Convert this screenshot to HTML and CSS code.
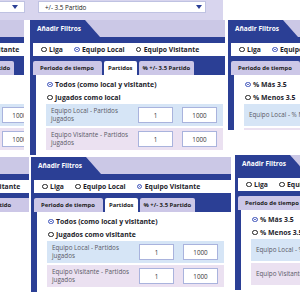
FILE: index.html
```html
<!DOCTYPE html>
<html lang="es">
<head>
  <meta charset="UTF-8" />
  <meta name="viewport" content="width=device-width, initial-scale=1.0"/>
  <title>Añadir Filtros</title>
  <link rel="stylesheet" href="styles.css">
</head>
<body>
<div class="board">

  <div class="tile bar">
    <div class="select sel-a"><span class="arrow"></span></div>
    <div class="select sel-b"><span>+/- 3.5 Partido</span><span class="arrow"></span></div>
  </div>

  <!-- upper left, cut -->
  <div class="tile t-ul">
    <div class="panel">
      <div class="panel-head"><span class="head-tab">Añadir Filtros</span></div>
      <div class="panel-body">
        <div class="scope"><span class="radio">Liga</span><span class="radio">Equipo Local</span><span class="radio on">Equipo Visitante</span></div>
        <div class="tabs"><span class="tab">Periodo de tiempo</span><span class="tab active">Partidos</span><span class="tab">% +/- 3.5 Partido</span></div>
        <div class="content">
          <div class="opt on">Todos (como local y visitante)</div>
          <div class="opt">Jugados como visitante</div>
          <div class="range local"><span class="lbl">Equipo Local - Partidos jugados</span><span class="num">1</span><span class="num">1000</span></div>
          <div class="range away"><span class="lbl">Equipo Visitante - Partidos jugados</span><span class="num">1</span><span class="num">1000</span></div>
        </div>
      </div>
    </div>
  </div>

  <div class="tile t-a">
    <div class="panel">
      <div class="panel-head"><span class="head-tab">Añadir Filtros</span></div>
      <div class="panel-body">
        <div class="scope"><span class="radio">Liga</span><span class="radio on">Equipo Local</span><span class="radio">Equipo Visitante</span></div>
        <div class="tabs"><span class="tab">Periodo de tiempo</span><span class="tab active">Partidos</span><span class="tab">% +/- 3.5 Partido</span></div>
        <div class="content">
          <div class="opt on">Todos (como local y visitante)</div>
          <div class="opt">Jugados como local</div>
          <div class="range local"><span class="lbl">Equipo Local - Partidos jugados</span><span class="num">1</span><span class="num">1000</span></div>
          <div class="range away"><span class="lbl">Equipo Visitante - Partidos jugados</span><span class="num">1</span><span class="num">1000</span></div>
        </div>
      </div>
    </div>
  </div>

  <div class="tile t-b">
    <div class="panel">
      <div class="panel-head"><span class="head-tab">Añadir Filtros</span></div>
      <div class="panel-body">
        <div class="scope"><span class="radio">Liga</span><span class="radio on">Equipo Local</span><span class="radio">Equipo Visitante</span></div>
        <div class="tabs"><span class="tab">Periodo de tiempo</span><span class="tab">Partidos</span><span class="tab active">% +/- 3.5 Partido</span></div>
        <div class="content">
          <div class="opt on">% Más 3.5</div>
          <div class="opt">% Menos 3.5</div>
          <div class="range local"><span class="lbl">Equipo Local - % Más 3.5</span><span class="num">0</span><span class="num">100</span></div>
          <div class="range away"><span class="lbl">Equipo Visitante - % Más 3.5</span><span class="num">0</span><span class="num">100</span></div>
        </div>
      </div>
    </div>
  </div>

  <!-- lower left, cut -->
  <div class="tile t-ll">
    <div class="panel">
      <div class="panel-head"><span class="head-tab">Añadir Filtros</span></div>
      <div class="panel-body">
        <div class="scope"><span class="radio">Liga</span><span class="radio">Equipo Local</span><span class="radio on">Equipo Visitante</span></div>
        <div class="tabs"><span class="tab">Periodo de tiempo</span><span class="tab active">Partidos</span><span class="tab">% +/- 3.5 Partido</span></div>
        <div class="content">
          <div class="opt on">Todos (como local y visitante)</div>
          <div class="opt">Jugados como visitante</div>
        </div>
      </div>
    </div>
  </div>

  <div class="tile t-c">
    <div class="panel">
      <div class="panel-head"><span class="head-tab">Añadir Filtros</span></div>
      <div class="panel-body">
        <div class="scope"><span class="radio">Liga</span><span class="radio">Equipo Local</span><span class="radio on">Equipo Visitante</span></div>
        <div class="tabs"><span class="tab">Periodo de tiempo</span><span class="tab active">Partidos</span><span class="tab">% +/- 3.5 Partido</span></div>
        <div class="content">
          <div class="opt on">Todos (como local y visitante)</div>
          <div class="opt">Jugados como visitante</div>
          <div class="range local"><span class="lbl">Equipo Local - Partidos jugados</span><span class="num">1</span><span class="num">1000</span></div>
          <div class="range away"><span class="lbl">Equipo Visitante - Partidos jugados</span><span class="num">1</span><span class="num">1000</span></div>
        </div>
      </div>
    </div>
  </div>

  <div class="tile t-d">
    <div class="panel">
      <div class="panel-head"><span class="head-tab">Añadir Filtros</span></div>
      <div class="panel-body">
        <div class="scope"><span class="radio">Liga</span><span class="radio">Equipo Local</span><span class="radio on">Equipo Visitante</span></div>
        <div class="tabs"><span class="tab">Periodo de tiempo</span><span class="tab">Partidos</span><span class="tab active">% +/- 3.5 Partido</span></div>
        <div class="content">
          <div class="opt on">% Más 3.5</div>
          <div class="opt">% Menos 3.5</div>
          <div class="range local"><span class="lbl">Equipo Local - % Más 3.5</span><span class="num">0</span><span class="num">100</span></div>
          <div class="range away"><span class="lbl">Equipo Visitante - % Más 3.5</span><span class="num">0</span><span class="num">100</span></div>
        </div>
      </div>
    </div>
  </div>

</div>
</body>
</html>
```

FILE: styles.css
```css
body {
  margin: 0;
  background: #fff;
  font-family: "Open Sans", "DejaVu Sans", sans-serif;
  color: #1d1d2b;
}
.board {
  position: relative;
  width: 300px;
  height: 300px;
  overflow: hidden;
}

/* each tile is a cut-out of the filter window */
.tile {
  position: absolute;
  overflow: hidden;
}
.bar    { left: 0;     top: 0;     width: 223px; height: 20px; }
.t-ul   { left: 0;     top: 20px;  width: 24px;  height: 135px; }
.t-a    { left: 30px;  top: 20px;  width: 195px; height: 135px; }
.t-b    { left: 228px; top: 20px;  width: 72px;  height: 110px; }
.t-ll   { left: 0;     top: 157px; width: 29px;  height: 143px; }
.t-c    { left: 31px;  top: 157px; width: 204px; height: 143px; }
.t-d    { left: 235px; top: 155px; width: 65px;  height: 135px; }

.t-ul .panel { margin-left: -150px; }
.t-ll .panel { margin-left: -149px; }
.t-ll .tab:last-child { flex: 1; }

/* dropdown strip */
.bar {
  background: #d8d5ee;
  display: flex;
  padding-top: 1px;
  box-sizing: border-box;
}
.select {
  height: 12px;
  background: #fff;
  border: 1px solid #bfc2e2;
  box-sizing: border-box;
  display: flex;
  align-items: center;
  justify-content: space-between;
  padding: 0 3px 0 6px;
  font-size: 6.3px;
  color: #222;
}
.sel-a {
  width: 26px;
  margin-left: -1px;
  justify-content: flex-end;
  padding-right: 6px;
}
.sel-b {
  width: 168px;
  margin-left: 13px;
}
.arrow {
  width: 0;
  height: 0;
  border-left: 3.5px solid transparent;
  border-right: 3.5px solid transparent;
  border-top: 4px solid #2b3f95;
}

/* panel */
.panel {
  width: 200px;
}
.panel-head {
  height: 17px;
  background: #cbc8e6;
}
.head-tab {
  display: block;
  width: 70px;
  height: 17px;
  background: #2b3f95;
  clip-path: polygon(0 0, 55px 0, 100% 100%, 0 100%);
  color: #fff;
  font-weight: 700;
  font-size: 6.5px;
  line-height: 17px;
  padding-left: 7px;
  box-sizing: border-box;
  white-space: nowrap;
}
.panel-body {
  background: #2b3f95;
  padding: 6px 0 0 3px;
}
.scope {
  background: #fff;
  height: 13px;
  display: flex;
  align-items: center;
  gap: 11px;
  padding-left: 8px;
  margin-bottom: 5px;
  font-size: 6.8px;
  font-weight: 700;
  white-space: nowrap;
}
.radio::before,
.opt::before {
  content: "";
  display: inline-block;
  width: 3.6px;
  height: 3.6px;
  border: 1px solid #222;
  border-radius: 50%;
  margin-right: 2.5px;
  vertical-align: -0.3px;
}
.on::before {
  border-color: #5a6cc4;
  background: #5a6cc4;
  box-shadow: inset 0 0 0 0.9px #fff;
}

.tabs {
  display: flex;
  gap: 2px;
  height: 14px;
}
.tab {
  background: #ccc7e7;
  padding: 0 4px;
  font-size: 5.9px;
  font-weight: 700;
  line-height: 14px;
  color: #222;
  white-space: nowrap;
  border-radius: 2px 2px 0 0;
}
.tab:first-child {
  padding: 0 8px 0 7px;
}
.tab.active {
  background: #fff;
}

.content {
  background: #fff;
  margin-left: 3px;
  padding: 3px 7px 5px 10px;
}
.opt {
  height: 13px;
  display: flex;
  align-items: center;
  padding-left: 1px;
  font-size: 6.9px;
  font-weight: 700;
  white-space: nowrap;
}
.range {
  display: flex;
  align-items: center;
  width: 177px;
  height: 22px;
  padding: 0 6px 0 5px;
  box-sizing: border-box;
}
.range + .range {
  margin-top: 2px;
}
.local { background: #d6e5f6; }
.away  { background: #ebe1f1; }
.lbl {
  flex: 1;
  font-size: 6.3px;
  line-height: 8px;
  color: #5a5a66;
}
.num {
  width: 35px;
  height: 16px;
  border: 1px solid #a9b3dd;
  background: #fff;
  box-sizing: border-box;
  display: flex;
  align-items: center;
  justify-content: center;
  font-size: 6.3px;
  color: #333;
}
.num + .num {
  margin-left: 9px;
}
```
